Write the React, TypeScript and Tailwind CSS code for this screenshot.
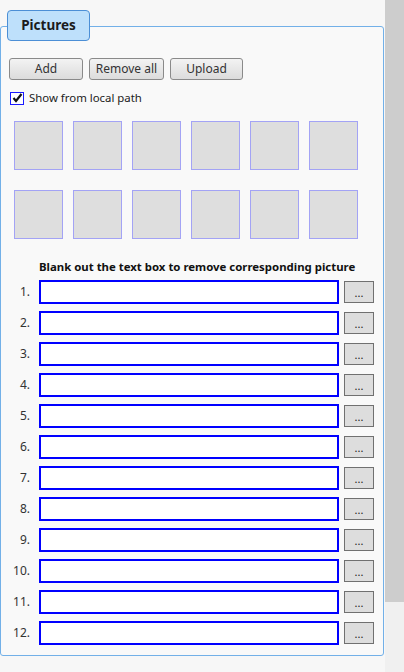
import React from "react";

const font = { fontFamily: '"Segoe UI", "Noto Sans", "Open Sans", sans-serif' };

function Btn({ label, w }: { label: string; w: string }) {
  return (
    <div
      className={`${w} h-[22px] flex items-center justify-center rounded-[3px] border border-[#8a8a8a] bg-gradient-to-b from-[#f3f3f3] to-[#dcdcdc] text-[12px] text-[#333]`}
    >
      {label}
    </div>
  );
}

export default function App() {
  const nums = Array.from({ length: 12 }, (_, i) => i + 1);
  const squares = Array.from({ length: 6 }, (_, i) => i);
  return (
    <div className="w-[404px] h-[672px] bg-[#f7f7f7] flex overflow-hidden" style={font}>
      <div className="w-[385px] h-full">
        <div className="relative mt-[26px] w-[384px] h-[630px] border border-[#72b0e8] rounded-[3px] bg-[#f9f9f9]">
          <div className="absolute left-[6px] top-[-17px] w-[83px] h-[31px] rounded-[4px] border border-[#4c8fd6] bg-[#bee0fb] flex items-center justify-center text-[13.5px] font-bold text-[#1b1b1b]">
            Pictures
          </div>
          <div className="flex flex-col pt-[31px] pl-[8px]">
            <div className="flex gap-[6px]">
              <Btn label="Add" w="w-[74px]" />
              <Btn label="Remove all" w="w-[75px]" />
              <Btn label="Upload" w="w-[73px]" />
            </div>
            <div className="mt-[10px] h-[16px] flex items-center">
              <div className="ml-[1px] w-[14px] h-[13px] border border-[#1a1aff] bg-white flex items-center justify-center">
                <svg width="11" height="10" viewBox="0 0 11 10">
                  <path d="M1.5 5 L4 8 L9.5 1" stroke="#111" strokeWidth="2.2" fill="none" />
                </svg>
              </div>
              <span className="ml-[5px] text-[11.4px] text-[#222]">Show from local path</span>
            </div>
            <div className="mt-[15px] ml-[5px] grid grid-cols-[repeat(6,49px)] gap-x-[10px] gap-y-[20px]">
              {[...squares, ...squares].map((_, i) => (
                <div key={i} className="w-[49px] h-[49px] border border-[#a3a3f5] bg-[#dedede]" />
              ))}
            </div>
            <div className="mt-[20px] ml-[30px] h-[16px] text-[11.4px] font-bold text-[#111] leading-[16px] whitespace-nowrap">
              Blank out the text box to remove corresponding picture
            </div>
            <div className="mt-[5px] flex flex-col gap-[7px]">
              {nums.map((n) => (
                <div key={n} className="flex items-center h-[24px]">
                  <div className="w-[21px] text-right text-[12px] text-[#333]">{n}.</div>
                  <div className="ml-[9px] w-[300px] h-[24px] border-2 border-[#0000ff] bg-white" />
                  <div className="ml-[5px] w-[30px] h-[22px] border border-[#707070] bg-[#dddddd] flex items-center justify-center text-[11px] text-[#222] leading-none">
                    ...
                  </div>
                </div>
              ))}
            </div>
          </div>
        </div>
      </div>
      <div className="w-[19px] h-full bg-[#f0f0f0] flex flex-col">
        <div className="h-[602px] bg-[#cdcdcd]" />
      </div>
    </div>
  );
}
